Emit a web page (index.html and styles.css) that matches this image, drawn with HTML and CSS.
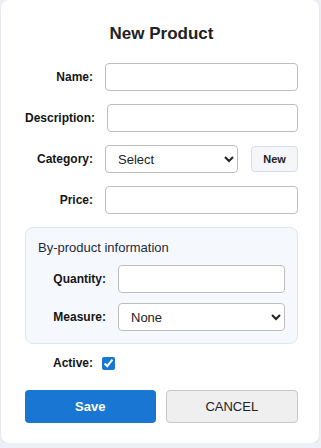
FILE: index.html
```html
<!DOCTYPE html>
<html lang="en">
<head>
<meta charset="UTF-8" />
<meta name="viewport" content="width=device-width, initial-scale=1" />
<title>New Product</title>
<link rel="stylesheet" href="styles.css">
</head>
<body>

<div class="card">
  <h2 class="title">New Product</h2>

  <div class="row">
    <label class="label" for="name">Name:</label>
    <input type="text" id="name" class="field" />
  </div>

  <div class="row">
    <label class="label" for="desc">Description:</label>
    <input type="text" id="desc" class="field" />
  </div>

  <div class="row">
    <label class="label" for="category">Category:</label>
    <select id="category" class="field">
      <option>Select</option>
    </select>
    <button class="btn-new">New</button>
  </div>

  <div class="row">
    <label class="label" for="price">Price:</label>
    <input type="text" id="price" class="field" />
  </div>

  <div class="byproduct">
    <div class="byproduct-title">By-product information</div>
    <div class="row">
      <label class="label" for="qty">Quantity:</label>
      <input type="text" id="qty" class="field" />
    </div>
    <div class="row">
      <label class="label" for="measure">Measure:</label>
      <select id="measure" class="field">
        <option>None</option>
      </select>
    </div>
  </div>

  <div class="row active-row">
    <label class="label" for="active">Active:</label>
    <input type="checkbox" id="active" checked />
  </div>

  <div class="actions">
    <button class="btn-save">Save</button>
    <button class="btn-cancel">CANCEL</button>
  </div>
</div>

</body>
</html>
```

FILE: styles.css
```css
body {
  margin: 0;
  background: #eef0f6;
  font-family: "Liberation Sans", Arial, sans-serif;
}
.card {
  width: 318px;
  height: 443px;
  box-sizing: border-box;
  margin-left: 1px;
  padding: 24px 21px 0 24px;
  background: #fff;
  border-radius: 8px;
  box-shadow: 0 1px 3px rgba(40, 50, 90, 0.08);
}
.title {
  margin: 0 0 19px;
  font-size: 17px;
  line-height: 20px;
  font-weight: bold;
  text-align: center;
  color: #222;
}
.row {
  display: flex;
  align-items: center;
  gap: 12px;
  margin-bottom: 13px;
}
.label {
  min-width: 68px;
  text-align: right;
  font-size: 12px;
  font-weight: bold;
  color: #151515;
  white-space: nowrap;
}
.field {
  flex: 1;
  min-width: 0;
  height: 28px;
  box-sizing: border-box;
  border: 1px solid #bdbdbd;
  border-radius: 4px;
  background: #fff;
  font-family: inherit;
  font-size: 13px;
  color: #222;
  padding: 0 8px;
}
.btn-new {
  flex: none;
  width: 47px;
  height: 26px;
  margin-left: 1px;
  background: #f4f6fa;
  border: 1px solid #d6dce6;
  border-radius: 4px;
  font-family: inherit;
  font-size: 11px;
  font-weight: bold;
  color: #222;
}
.byproduct {
  padding: 12px 12px 0;
  background: #f5f9fe;
  border: 1px solid #dde6f0;
  border-radius: 8px;
  width: 273px;
  box-sizing: border-box;
}
.byproduct-title {
  font-size: 13px;
  line-height: 15px;
  color: #1c2b3d;
  margin-bottom: 10px;
}
.byproduct .row {
  margin-bottom: 10px;
}
.byproduct .row:last-child {
  margin-bottom: 12px;
}
.active-row {
  margin-top: 12px;
  gap: 9px;
}
.active-row input {
  margin: 0;
  width: 13px;
  height: 13px;
  accent-color: #1976d2;
}
.actions {
  display: flex;
  gap: 10px;
  margin-top: 20px;
  width: 273px;
}
.actions button {
  flex: 1;
  height: 33px;
  border-radius: 4px;
  font-family: inherit;
  font-size: 13px;
}
.btn-save {
  background: #1976d2;
  border: none;
  color: #fff;
  font-weight: bold;
}
.btn-cancel {
  background: #efefef;
  border: 1px solid #c8c8c8;
  color: #222;
}
```
